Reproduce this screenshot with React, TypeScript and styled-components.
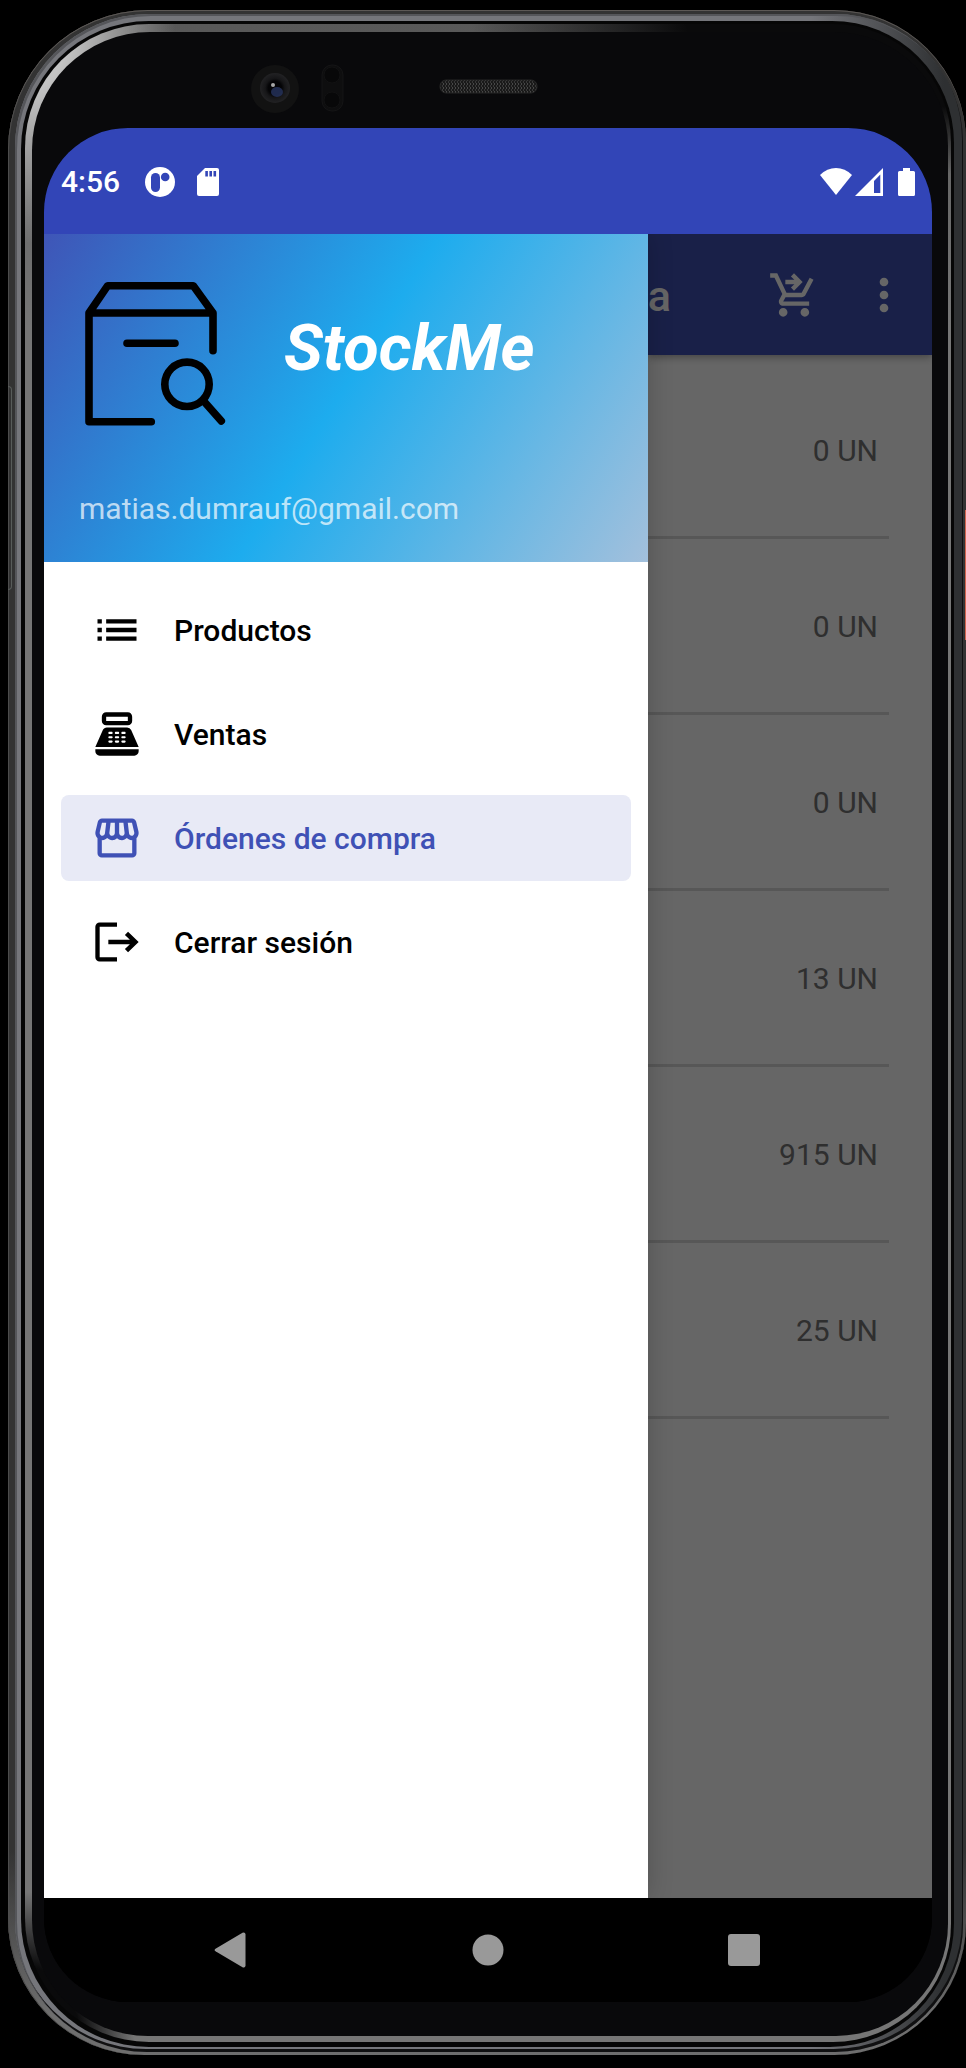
import React from "react";
import styled, { createGlobalStyle } from "styled-components";
import {
  MdList,
  MdMoreVert,
  MdOutlineStorefront,
  MdPointOfSale,
  MdShoppingCartCheckout,
} from "react-icons/md";

const GlobalStyle = createGlobalStyle`
  *, *::before, *::after { box-sizing: border-box; }
  body {
    margin: 0;
    background: #000;
    font-family: Roboto, "Liberation Sans", sans-serif;
    font-size: 30px;
    line-height: 36px;
  }
  button { border: 0; padding: 0; background: none; font: inherit; color: inherit; cursor: pointer; }
  svg { display: block; flex: none; }
`;

/* Phone body: each ring wraps the next one */

const Page = styled.div`
  display: flex;
  flex-direction: column;
  min-height: 100vh;
  padding: 10px 0 13px 8px;
`;

const Ring = styled.div`
  display: flex;
  flex-direction: column;
  flex: 1;
`;

const Shell = styled(Ring)`
  position: relative;
  padding: 4px 3px 3px 7px;
  border-radius: 140px 132px 132px 136px;
  background: linear-gradient(#333 0, #333 90%, #6e6e6e 98%);
  box-shadow: inset 0 1px 0 #5c5855, inset 1px 0 0 #4c4c4c;

  &::before {
    content: "";
    position: absolute;
    left: 0;
    top: 376px;
    width: 4px;
    height: 204px;
    border: 1px solid #585c5a;
    border-left: 0;
    border-radius: 0 4px 4px 0;
  }

  &::after {
    content: "";
    position: absolute;
    right: 0;
    top: 500px;
    width: 1px;
    height: 130px;
    background: #d2654e;
  }
`;

const Rim = styled(Ring)`
  padding: 7px 9px 5px 6px;
  border-radius: 134px 128px 128px 132px;
  background: linear-gradient(to right, #75767b 0, #75767b 84%, #2e3032 98%);
  box-shadow: inset 2px 2px 0 #55565a, inset -1px -3px 0 #101011;
`;

const Groove = styled(Ring)`
  padding: 3px 3px 5px 4px;
  border-radius: 128px 122px 124px 128px;
  background: #060606;
`;

const Bevel = styled(Ring)`
  padding: 8px 3px 6px 7px;
  border-radius: 124px 118px 118px 124px;
  background:
    radial-gradient(ellipse 480px 150px at 100% 0, #0a0a0b 55%, transparent 100%),
    radial-gradient(ellipse 150px 220px at 0 0, #c4c4c4 30%, transparent 100%),
    radial-gradient(ellipse 110px 150px at 0 100%, #0a0a0b 50%, transparent 100%),
    linear-gradient(#585858 0, #767676 15%);
`;

const Face = styled(Ring)`
  padding: 0 16px 34px 12px;
  border-radius: 118px 114px 112px 116px;
  background: #09090b;
`;

const SensorBar = styled.div`
  height: 96px;
  padding: 31px 0 0 23%;
`;

const Screen = styled.main`
  display: flex;
  flex-direction: column;
  flex: 1;
  overflow: hidden;
  border-radius: 84px;
  background: #000;
`;

const StatusBar = styled.header`
  position: relative;
  z-index: 2;
  display: flex;
  align-items: center;
  justify-content: space-between;
  height: 106px;
  padding: 2px 17px 0;
  color: #fff;
  background: #3245b7;
  font-weight: 500;
`;

const StatusGroup = styled.div<{ $gap: number }>`
  display: flex;
  align-items: center;
  gap: ${(p) => p.$gap}px;
`;

const Body = styled.div`
  display: flex;
  flex: 1;
  background: #fff;
`;

const Drawer = styled.aside`
  position: relative;
  z-index: 1;
  width: 68%;
  background: #fff;
  box-shadow: 0 0 24px rgba(0, 0, 0, 0.2);
`;

const DrawerHeader = styled.div`
  padding: 46px 35px 35px;
  background: linear-gradient(122deg, #3f55b7 0%, #1dacee 49%, #a3c0dc 100%);
`;

const Brand = styled.div`
  display: flex;
  align-items: center;
  gap: 58px;
  padding-left: 5px;
`;

const BrandName = styled.h1`
  margin: 0;
  padding-bottom: 10px;
  color: #fff;
  font-size: 65px;
  line-height: 76px;
  font-weight: 700;
  font-style: italic;
`;

const Email = styled.p`
  margin: 65px 0 0;
  color: rgba(255, 255, 255, 0.7);
`;

const Menu = styled.nav`
  display: flex;
  flex-direction: column;
  gap: 18px;
  padding: 25px 17px;
`;

const MenuItem = styled.a<{ $active?: boolean }>`
  display: flex;
  align-items: center;
  gap: 31px;
  height: 86px;
  padding: 0 30px;
  border-radius: 8px;
  color: ${(p) => (p.$active ? "#3f51b5" : "#000")};
  background: ${(p) => (p.$active ? "#e8eaf6" : "transparent")};
  font-weight: 500;
  text-decoration: none;
`;

const MenuLabel = styled.span`
  padding-top: 2px;
`;

const Content = styled.section`
  position: relative;
  flex: 1;

  &::after {
    content: "";
    position: absolute;
    inset: 0;
    background: rgba(0, 0, 0, 0.6);
    pointer-events: none;
  }
`;

const AppBar = styled.div`
  display: flex;
  align-items: center;
  gap: 38px;
  height: 121px;
  padding: 0 22px 0 0;
  color: #fff;
  background: #3f51b5;
  box-shadow: 0 2px 8px rgba(0, 0, 0, 0.35);
`;

const Title = styled.h2`
  margin: 0 auto 0 0;
  padding-top: 2px;
  font-size: 43px;
  line-height: 52px;
  font-weight: 500;
`;

const StockList = styled.ul`
  margin: 0 43px 0 0;
  padding: 8px 0 0;
  list-style: none;
`;

const StockRow = styled.li`
  display: flex;
  align-items: center;
  justify-content: flex-end;
  height: 176px;
  padding: 2px 11px 0 0;
  border-bottom: 3px solid #dadada;
  color: #757575;
`;

const NavBar = styled.footer`
  display: grid;
  grid-template-columns: repeat(3, 1fr);
  align-items: center;
  height: 104px;
  padding: 0 60px;
  color: #999;
  background: #000;
`;

const NavButton = styled.button`
  display: flex;
  align-items: center;
  justify-content: center;
  height: 60px;
`;

const Sensors = () => (
  <svg width="292" height="52" viewBox="0 0 292 52" aria-hidden="true">
    <defs>
      <radialGradient id="lens">
        <stop offset="0.45" stopColor="#040406" />
        <stop offset="0.65" stopColor="#161618" />
        <stop offset="1" stopColor="#222224" />
      </radialGradient>
      <pattern id="mesh" width="3" height="4" patternUnits="userSpaceOnUse">
        <rect width="3" height="4" fill="#1a1a1a" />
        <rect width="1" height="2" fill="#484848" />
        <rect x="2" y="2" width="1" height="2" fill="#383838" />
      </pattern>
    </defs>
    <circle cx="27" cy="26" r="24" fill="#121212" />
    <circle cx="27" cy="25" r="15" fill="url(#lens)" />
    <ellipse cx="29" cy="29" rx="6" ry="5" fill="#27345f" opacity="0.8" />
    <circle cx="25" cy="22" r="2" fill="#a8a8a8" />
    <rect x="74" y="2" width="21" height="46" rx="10" fill="#0e0e0f" stroke="#151516" />
    <circle cx="84" cy="12" r="8" fill="#080809" stroke="#121213" />
    <circle cx="84" cy="37" r="8" fill="#080809" stroke="#121213" />
    <rect x="192" y="17" width="97" height="13" rx="6" fill="url(#mesh)" stroke="#262626" />
  </svg>
);

const ProfileGlyph = () => (
  <svg width="30" height="30" viewBox="0 0 30 30" aria-hidden="true">
    <circle cx="15" cy="15" r="15" fill="#fff" />
    <rect x="6" y="6" width="9" height="19" rx="4.5" fill="#3245b7" />
    <circle cx="20.2" cy="10" r="4.3" fill="#3245b7" />
  </svg>
);

const SdCardGlyph = () => (
  <svg width="22" height="28" viewBox="0 0 22 28" aria-hidden="true">
    <path d="M8 0h12a2 2 0 0 1 2 2v24a2 2 0 0 1-2 2H2a2 2 0 0 1-2-2V8z" fill="#fff" />
    <path d="M8.3 3h2.6v5.6H8.3zM12.4 3H15v5.6h-2.6zM16.5 3h2.6v5.6h-2.6z" fill="#3245b7" />
  </svg>
);

const WifiGlyph = () => (
  <svg width="32" height="28" viewBox="0 0 32 28" aria-hidden="true">
    <path d="M0 7Q7 0 16 0t16 7L16 27z" fill="#fff" />
  </svg>
);

const SignalGlyph = () => (
  <svg width="28" height="28" viewBox="0 0 28 28" aria-hidden="true">
    <path d="M28 0v28H0zM25.3 6.5L19 13v12h6.3z" fill="#fff" fillRule="evenodd" />
  </svg>
);

const BatteryGlyph = () => (
  <svg width="17" height="28" viewBox="0 0 17 28" aria-hidden="true">
    <path
      d="M5 0h7v3h3.5A1.5 1.5 0 0 1 17 4.5v22a1.5 1.5 0 0 1-1.5 1.5h-14A1.5 1.5 0 0 1 0 26.5v-22A1.5 1.5 0 0 1 1.5 3H5z"
      fill="#fff"
    />
  </svg>
);

const BoxSearchLogo = () => (
  <svg
    width="142"
    height="146"
    viewBox="0 0 142 146"
    fill="none"
    stroke="#000"
    strokeWidth="7.6"
    strokeLinecap="round"
    strokeLinejoin="round"
    aria-hidden="true"
  >
    <path d="M67.3 141.7H5V33L23.7 5.7h85.6L129 33v37.7M5 33h124M43 63.3h48" />
    <circle cx="103" cy="104.3" r="22.2" />
    <path d="M120.5 122L137.3 141" />
  </svg>
);

const LogoutIcon = () => (
  <svg width="52" height="52" viewBox="0 0 24 24" fill="currentColor" aria-hidden="true">
    <path d="M4 5h8V3H4c-1.1 0-2 .9-2 2v14c0 1.1.9 2 2 2h8v-2H4z" />
    <path d="M17.1 7.3l-1.45 1.45L17.95 11H8v2h9.95l-2.3 2.25 1.45 1.45L22 12z" />
  </svg>
);

const menu = [
  { label: "Productos", icon: <MdList size={52} /> },
  { label: "Ventas", icon: <MdPointOfSale size={52} /> },
  { label: "Órdenes de compra", icon: <MdOutlineStorefront size={52} />, active: true },
  { label: "Cerrar sesión", icon: <LogoutIcon /> },
];

const stock = ["0 UN", "0 UN", "0 UN", "13 UN", "915 UN", "25 UN"];

export default function App() {
  return (
    <Page>
      <GlobalStyle />
      <Shell>
        <Rim>
          <Groove>
            <Bevel>
              <Face>
                <SensorBar>
                  <Sensors />
                </SensorBar>
                <Screen>
                  <StatusBar>
                    <StatusGroup $gap={25}>
                      <span>4:56</span>
                      <StatusGroup $gap={22}>
                        <ProfileGlyph />
                        <SdCardGlyph />
                      </StatusGroup>
                    </StatusGroup>
                    <StatusGroup $gap={15}>
                      <StatusGroup $gap={3}>
                        <WifiGlyph />
                        <SignalGlyph />
                      </StatusGroup>
                      <BatteryGlyph />
                    </StatusGroup>
                  </StatusBar>
                  <Body>
                    <Drawer>
                      <DrawerHeader>
                        <Brand>
                          <BoxSearchLogo />
                          <BrandName>StockMe</BrandName>
                        </Brand>
                        <Email>matias.dumrauf@gmail.com</Email>
                      </DrawerHeader>
                      <Menu>
                        {menu.map((m) => (
                          <MenuItem
                            key={m.label}
                            href="#"
                            $active={m.active}
                            aria-current={m.active ? "page" : undefined}
                          >
                            {m.icon}
                            <MenuLabel>{m.label}</MenuLabel>
                          </MenuItem>
                        ))}
                      </Menu>
                    </Drawer>
                    <Content>
                      <AppBar>
                        <Title>a</Title>
                        <button type="button" aria-label="Enviar al carrito">
                          <MdShoppingCartCheckout size={52} />
                        </button>
                        <button type="button" aria-label="Más opciones">
                          <MdMoreVert size={52} />
                        </button>
                      </AppBar>
                      <StockList>
                        {stock.map((amount, i) => (
                          <StockRow key={i}>{amount}</StockRow>
                        ))}
                      </StockList>
                    </Content>
                  </Body>
                  <NavBar>
                    <NavButton type="button" aria-label="Atrás">
                      <svg width="36" height="36" viewBox="0 0 36 36" fill="currentColor">
                        <path d="M28.5.8A2 2 0 0 1 31.500 2.500v31a2 2 0 0 1-3 1.700L1.500 19.300a1.600 1.600 0 0 1 0-2.600z" />
                      </svg>
                    </NavButton>
                    <NavButton type="button" aria-label="Inicio">
                      <svg width="32" height="32" viewBox="0 0 32 32" fill="currentColor">
                        <circle cx="16" cy="16" r="15.5" />
                      </svg>
                    </NavButton>
                    <NavButton type="button" aria-label="Recientes">
                      <svg width="32" height="32" viewBox="0 0 32 32" fill="currentColor">
                        <rect width="32" height="32" rx="3" />
                      </svg>
                    </NavButton>
                  </NavBar>
                </Screen>
              </Face>
            </Bevel>
          </Groove>
        </Rim>
      </Shell>
    </Page>
  );
}
